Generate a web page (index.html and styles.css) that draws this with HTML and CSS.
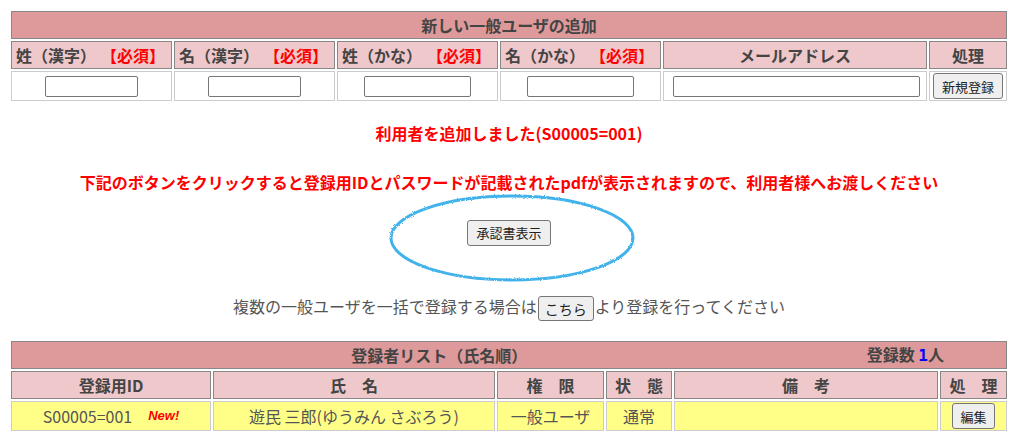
FILE: index.html
```html
<!DOCTYPE html>
<html lang="ja">
<head>
    <meta charset="UTF-8">
    <meta name="viewport" content="width=device-width, initial-scale=1.0">
    <title>一般ユーザの追加</title>
    <link rel="stylesheet" href="styles.css">
</head>
<body>
    <div class="page">
        <div class="grid grid-add">
            <div class="cell title span-all">新しい一般ユーザの追加</div>
            <div class="cell head req"><span>姓（漢字）</span><span class="must">【必須】</span></div>
            <div class="cell head req"><span>名（漢字）</span><span class="must">【必須】</span></div>
            <div class="cell head req"><span>姓（かな）</span><span class="must">【必須】</span></div>
            <div class="cell head req"><span>名（かな）</span><span class="must">【必須】</span></div>
            <div class="cell head">メールアドレス</div>
            <div class="cell head">処理</div>
            <div class="cell data"><input type="text" class="field field-s"></div>
            <div class="cell data"><input type="text" class="field field-s"></div>
            <div class="cell data"><input type="text" class="field field-m"></div>
            <div class="cell data"><input type="text" class="field field-m"></div>
            <div class="cell data"><input type="text" class="field field-l"></div>
            <div class="cell data"><button type="button" class="btn">新規登録</button></div>
        </div>

        <p class="msg msg-done">利用者を追加しました(S00005=001)</p>
        <p class="msg msg-note">下記のボタンをクリックすると登録用IDとパスワードが記載されたpdfが表示されますので、利用者様へお渡しください</p>

        <div class="mark">
            <svg class="mark-ring" width="248" height="90" viewBox="0 0 248 90">
                <defs>
                    <filter id="crayon" x="-5%" y="-10%" width="110%" height="120%">
                        <feTurbulence type="fractalNoise" baseFrequency="0.9" numOctaves="2" result="noise"/>
                        <feDisplacementMap in="SourceGraphic" in2="noise" scale="2.5"/>
                    </filter>
                </defs>
                <ellipse cx="124" cy="45" rx="121" ry="42" fill="none" stroke="#43b3ea" stroke-width="3" filter="url(#crayon)"/>
            </svg>
            <button type="button" class="btn btn-pdf">承認書表示</button>
        </div>

        <p class="bulk">複数の一般ユーザを一括で登録する場合は<button type="button" class="btn btn-here">こちら</button>より登録を行ってください</p>

        <div class="grid grid-list">
            <div class="cell title span-all list-title">
                <span class="list-name">登録者リスト（氏名順）</span>
                <span class="count">登録数 <b class="num">1</b>人</span>
            </div>
            <div class="cell head">登録用ID</div>
            <div class="cell head">氏　名</div>
            <div class="cell head">権　限</div>
            <div class="cell head">状　態</div>
            <div class="cell head">備　考</div>
            <div class="cell head">処　理</div>
            <div class="cell row">S00005=001<span class="new">New!</span></div>
            <div class="cell row">遊民 三郎(ゆうみん さぶろう)</div>
            <div class="cell row">一般ユーザ</div>
            <div class="cell row">通常</div>
            <div class="cell row"></div>
            <div class="cell row"><button type="button" class="btn btn-edit">編集</button></div>
        </div>
    </div>
</body>
</html>
```

FILE: styles.css
```css
* {
    box-sizing: border-box;
}
body {
    margin: 0;
    font-family: "Noto Sans CJK JP", "Noto Sans", sans-serif;
    color: #555;
    background: #fff;
}
.page {
    padding: 11px 0 0 11px;
    width: 1007px;
}
.grid {
    display: grid;
    gap: 2px;
    width: 996px;
}
.grid-add {
    grid-template-columns: 161px 161px 161px 161px 264px 78px;
    grid-template-rows: 28px 28px 30px;
}
.grid-list {
    grid-template-columns: 200px 282px 107px 66px 264px 67px;
    grid-template-rows: 28px 28px 30px;
    margin-top: 20px;
}
.cell {
    display: flex;
    align-items: center;
    justify-content: center;
    font-size: 16px;
    line-height: 20px;
    white-space: nowrap;
}
.span-all {
    grid-column: 1 / -1;
}
.title {
    background-color: #de9a9a;
    border: 1px solid #888;
    color: #444;
    font-weight: bold;
}
.head {
    background-color: #eec8ca;
    border: 1px solid #888;
    color: #444;
    font-weight: bold;
}
.req {
    justify-content: space-between;
    padding: 0 6px 0 4px;
}
.must {
    color: #f00;
}
.data {
    border: 1px solid #ccc;
    background: #fff;
}
.row {
    border: 1px solid #ccc;
    background-color: #ffff88;
    color: #555;
}
.field {
    height: 21px;
    border: 1px solid #767676;
    border-radius: 2px;
    background: #fff;
    padding: 0 3px;
}
.field-s {
    width: 93px;
}
.field-m {
    width: 107px;
}
.field-l {
    width: 247px;
    margin-left: 2px;
}
.btn {
    height: 26px;
    padding: 0 8px;
    font-family: inherit;
    font-size: 13px;
    color: #222;
    background-color: #efefef;
    border: 1px solid #767676;
    border-radius: 3px;
}
.msg {
    margin: 0;
    text-align: center;
    color: #f00;
    font-size: 16px;
    font-weight: bold;
    line-height: 24px;
    width: 996px;
}
.msg-done {
    margin-top: 20px;
}
.msg-note {
    margin-top: 25px;
}
.mark {
    position: relative;
    width: 248px;
    height: 88px;
    margin: 0 auto 0 377px;
    padding-top: 25px;
    text-align: center;
}
.mark-ring {
    position: absolute;
    left: 0;
    top: -1px;
}
.btn-pdf {
    position: relative;
    margin-left: -6px;
}
.bulk {
    margin: 11px 0 0;
    width: 996px;
    text-align: center;
    font-size: 16px;
    line-height: 26px;
    color: #555;
}
.btn-here {
    height: 25px;
    padding: 0 6px;
    font-size: 14px;
    margin: 0 1px;
    vertical-align: middle;
}
.list-title {
    justify-content: flex-start;
}
.list-name {
    flex: 1;
    text-align: center;
}
.count {
    padding-right: 62px;
}
.num {
    color: #00f;
    font-family: "DejaVu Sans Mono", monospace;
}
.new {
    margin-left: 16px;
    color: #f00;
    font-family: "Liberation Sans", Arial, sans-serif;
    font-size: 13px;
    font-weight: bold;
    font-style: italic;
}
.btn-edit {
    padding: 0 7px;
}
```
